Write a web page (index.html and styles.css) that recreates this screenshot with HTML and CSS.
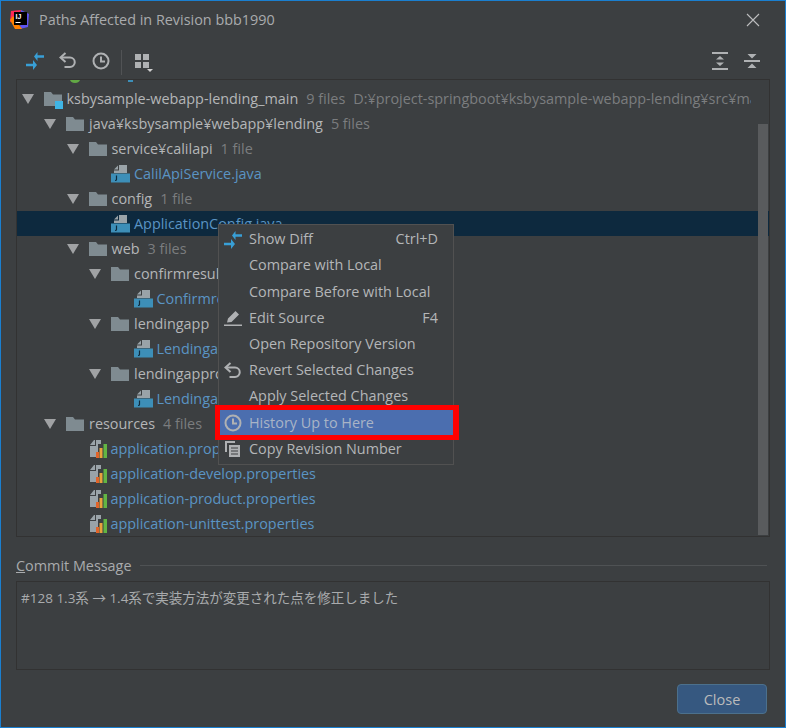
FILE: index.html
```html
<!DOCTYPE html>
<html lang="ja">
<head>
<meta charset="utf-8">
<title>Paths Affected in Revision bbb1990</title>
<link rel="stylesheet" href="styles.css">
</head>
<body>
<svg class="defs" width="0" height="0">
  <defs>
    <symbol id="i-arrow" viewBox="0 0 12 12"><path d="M0 1h12L6 11z" fill="#a0a2a4"/></symbol>
    <symbol id="i-folder" viewBox="0 0 18 16"><path d="M0 1h7l2 2.500h9V15H0z" fill="#7f8b91"/></symbol>
    <symbol id="i-java" viewBox="0 0 19 19">
      <path d="M3 9V6.500h5V1h8v8z" fill="#9aa3a8"/><path d="M3 5.500L7 1.500V5.500z" fill="#9aa3a8"/>
      <rect x="0" y="9.500" width="19" height="9" fill="#3d8fb8"/>
      <path d="M5.500 11.500v4q0 1-1.500 1" fill="none" stroke="#0f2a3c" stroke-width="1.200"/>
    </symbol>
    <symbol id="i-props" viewBox="0 0 18 19">
      <path d="M1 6l4-5h1v5zM7 1h5v4H9v8H7z" fill="#9aa3a8"/><path d="M1 7h6v11H1z" fill="#9aa3a8"/>
      <rect x="7" y="13" width="3" height="6" fill="#e0642a"/><rect x="10.500" y="9" width="3" height="10" fill="#e8a33d"/><rect x="14.500" y="5" width="3.500" height="14" fill="#62b543"/>
    </symbol>
    <symbol id="i-diff" viewBox="0 0 18 18">
      <path d="M8 4.500L11.500 0V3.300H18V5.700H11.500V9z" fill="#389fd6"/>
      <path d="M0 11.800H7V8l4 5-4 5V14.200H0z" fill="#389fd6"/>
    </symbol>
    <symbol id="i-revert" viewBox="0 0 18 18">
      <path d="M2.500 5.500h8.500a4.700 4.700 0 0 1 0 9.500H5.500" fill="none" stroke="#afb1b3" stroke-width="2"/><path d="M6.500 1L1.500 5.500l5 4.500" fill="none" stroke="#afb1b3" stroke-width="2"/>
    </symbol>
    <symbol id="i-history" viewBox="0 0 18 18">
      <circle cx="9" cy="9" r="7.500" fill="none" stroke="#afb1b3" stroke-width="2"/><path d="M9 4.500V9.500H13" fill="none" stroke="#afb1b3" stroke-width="2"/>
    </symbol>
  </defs>
</svg>
<div class="dialog">
  <header class="titlebar">
    <svg class="logo" width="20" height="20" viewBox="0 0 20 20">
      <path d="M1 1L11 0 8 10 0 12z" fill="#fe2857"/><path d="M11 0l8 4-1 13-8 2z" fill="#5f54f0"/><path d="M0 10l5 9h7L3 6z" fill="#ff8100"/>
      <rect x="4" y="2" width="13" height="13" fill="#000"/>
      <text x="5.500" y="9" class="logo-text">IJ</text><rect x="5.500" y="12" width="5" height="1" fill="#fff"/>
    </svg>
    <span class="title">Paths Affected in Revision bbb1990</span>
    <svg class="close-x" width="14" height="14" viewBox="0 0 14 14"><path d="M1 1l12 12M13 1L1 13" stroke="#bdbebf" stroke-width="1.100" fill="none"/></svg>
  </header>

  <div class="toolbar">
    <svg class="tool" width="18" height="18"><use href="#i-diff"/></svg>
    <svg class="tool" width="18" height="18"><use href="#i-revert"/></svg>
    <svg class="tool" width="18" height="18"><use href="#i-history"/></svg>
    <span class="tool-sep"></span>
    <svg class="tool tool-group" width="20" height="20" viewBox="0 0 20 20">
      <path d="M0 1h6v6H0zM8 1h6v6H8zM0 9h6v6H0zM8 9h6v6H8z" fill="#afb1b3"/><path d="M12 16h6l-3 3z" fill="#d0d0d0"/>
    </svg>
    <span class="tool-spacer"></span>
    <svg class="tool" width="16" height="18" viewBox="0 0 16 18">
      <path d="M0 0h16v2H0zM0 16h16v2H0z" fill="#afb1b3"/><path d="M8 4l4 3.500H4zM8 14l4-3.500H4z" fill="#afb1b3"/>
    </svg>
    <svg class="tool tool-last" width="16" height="16" viewBox="0 0 16 16">
      <path d="M0 7h16v2H0z" fill="#afb1b3"/><path d="M3.500 1h9L8 5.500zM3.500 15h9L8 10.500z" fill="#afb1b3"/>
    </svg>
  </div>

  <div class="tree">
    <div class="peek"><i class="peek-green"></i><i class="peek-blue"></i></div>

    <div class="row d0">
      <svg class="arrow"><use href="#i-arrow"/></svg>
      <span class="ic module"><svg width="18" height="16"><use href="#i-folder"/></svg><i class="badge"></i></span>
      <span class="name">ksbysample-webapp-lending_main</span><span class="meta">9 files</span><span class="meta path">D:¥project-springboot¥ksbysample-webapp-lending¥src¥main</span>
    </div>
    <div class="row d1">
      <svg class="arrow"><use href="#i-arrow"/></svg>
      <svg class="ic" width="18" height="16"><use href="#i-folder"/></svg>
      <span class="name">java¥ksbysample¥webapp¥lending</span><span class="meta">5 files</span>
    </div>
    <div class="row d2">
      <svg class="arrow"><use href="#i-arrow"/></svg>
      <svg class="ic" width="18" height="16"><use href="#i-folder"/></svg>
      <span class="name">service¥calilapi</span><span class="meta">1 file</span>
    </div>
    <div class="row d3 leaf">
      <span class="arrow"></span>
      <svg class="ic" width="19" height="19"><use href="#i-java"/></svg>
      <span class="name link">CalilApiService.java</span>
    </div>
    <div class="row d2">
      <svg class="arrow"><use href="#i-arrow"/></svg>
      <svg class="ic" width="18" height="16"><use href="#i-folder"/></svg>
      <span class="name">config</span><span class="meta">1 file</span>
    </div>
    <div class="row d3 leaf selected">
      <span class="arrow"></span>
      <svg class="ic" width="19" height="19"><use href="#i-java"/></svg>
      <span class="name link">ApplicationConfig.java</span>
    </div>
    <div class="row d2">
      <svg class="arrow"><use href="#i-arrow"/></svg>
      <svg class="ic" width="18" height="16"><use href="#i-folder"/></svg>
      <span class="name">web</span><span class="meta">3 files</span>
    </div>
    <div class="row d3">
      <svg class="arrow"><use href="#i-arrow"/></svg>
      <svg class="ic" width="18" height="16"><use href="#i-folder"/></svg>
      <span class="name">confirmresult</span><span class="meta">1 file</span>
    </div>
    <div class="row d4 leaf">
      <span class="arrow"></span>
      <svg class="ic" width="19" height="19"><use href="#i-java"/></svg>
      <span class="name link">ConfirmresultController.java</span>
    </div>
    <div class="row d3">
      <svg class="arrow"><use href="#i-arrow"/></svg>
      <svg class="ic" width="18" height="16"><use href="#i-folder"/></svg>
      <span class="name">lendingapp</span><span class="meta">1 file</span>
    </div>
    <div class="row d4 leaf">
      <span class="arrow"></span>
      <svg class="ic" width="19" height="19"><use href="#i-java"/></svg>
      <span class="name link">LendingappController.java</span>
    </div>
    <div class="row d3">
      <svg class="arrow"><use href="#i-arrow"/></svg>
      <svg class="ic" width="18" height="16"><use href="#i-folder"/></svg>
      <span class="name">lendingapproval</span><span class="meta">1 file</span>
    </div>
    <div class="row d4 leaf">
      <span class="arrow"></span>
      <svg class="ic" width="19" height="19"><use href="#i-java"/></svg>
      <span class="name link">LendingapprovalController.java</span>
    </div>
    <div class="row d1">
      <svg class="arrow"><use href="#i-arrow"/></svg>
      <svg class="ic" width="18" height="16"><use href="#i-folder"/></svg>
      <span class="name">resources</span><span class="meta">4 files</span>
    </div>
    <div class="row d2 leaf">
      <span class="arrow"></span>
      <svg class="ic" width="18" height="19"><use href="#i-props"/></svg>
      <span class="name link">application.properties</span>
    </div>
    <div class="row d2 leaf">
      <span class="arrow"></span>
      <svg class="ic" width="18" height="19"><use href="#i-props"/></svg>
      <span class="name link">application-develop.properties</span>
    </div>
    <div class="row d2 leaf">
      <span class="arrow"></span>
      <svg class="ic" width="18" height="19"><use href="#i-props"/></svg>
      <span class="name link">application-product.properties</span>
    </div>
    <div class="row d2 leaf">
      <span class="arrow"></span>
      <svg class="ic" width="18" height="19"><use href="#i-props"/></svg>
      <span class="name link">application-unittest.properties</span>
    </div>
    <div class="scrollbar"></div>
  </div>

  <div class="commit-head">
    <span class="commit-label"><u>C</u>ommit Message</span>
    <span class="commit-line"></span>
  </div>
  <div class="commit-box">#128 1.3系 → 1.4系で実装方法が変更された点を修正しました</div>

  <footer class="footer">
    <button class="close-btn" type="button">Close</button>
  </footer>

  <div class="menu">
    <div class="mi"><svg class="mi-ic" width="18" height="18"><use href="#i-diff"/></svg><span class="mt">Show Diff</span><span class="mt key">Ctrl+D</span></div>
    <div class="mi"><span class="mi-ic"></span><span class="mt">Compare with Local</span></div>
    <div class="mi"><span class="mi-ic"></span><span class="mt">Compare Before with Local</span></div>
    <div class="mi"><svg class="mi-ic" width="18" height="18" viewBox="0 0 18 18"><path d="M0 15.500h18V17H0zM3 13.500l1-4L11.500 2l3.500 3.500L7.500 13z" fill="#afb1b3"/></svg><span class="mt">Edit Source</span><span class="mt key">F4</span></div>
    <div class="mi"><span class="mi-ic"></span><span class="mt">Open Repository Version</span></div>
    <div class="mi"><svg class="mi-ic" width="18" height="18"><use href="#i-revert"/></svg><span class="mt">Revert Selected Changes</span></div>
    <div class="mi"><span class="mi-ic"></span><span class="mt">Apply Selected Changes</span></div>
    <div class="mi active"><svg class="mi-ic" width="18" height="18"><use href="#i-history"/></svg><span class="mt">History Up to Here</span></div>
    <div class="mi"><svg class="mi-ic" width="18" height="18" viewBox="0 0 18 18"><path d="M1 1h10v2H3v9H1z" fill="#afb1b3"/><path d="M5 5h11v12H5z" fill="#afb1b3"/><path d="M7 8h7M7 11h7M7 14h7" stroke="#3c3f41" stroke-width="1"/></svg><span class="mt">Copy Revision Number</span></div>
  </div>
  <div class="callout"></div>
</div>
</body>
</html>
```

FILE: styles.css
```css
* { box-sizing: border-box; }
html, body { margin: 0; padding: 0; height: 100%; overflow: hidden; background: #3c3f41; }
body { font-family: "Open Sans", "Noto Sans CJK JP", sans-serif; font-size: 14.4px; color: #bbbbbb; }
.defs { position: absolute; }

.dialog {
  position: relative;
  width: 786px; height: 728px;
  display: flex; flex-direction: column;
  background: #3c3f41;
  border: 1px solid #1a7fd0;
  padding: 0 15px;
}

.titlebar { height: 36px; display: flex; align-items: center; margin: 0 -6px; padding-top: 1px; }
.logo { flex: none; margin-right: 9px; }
.logo-text { font: bold 7px "Liberation Sans", sans-serif; fill: #fff; }
.title { font-size: 14.4px; color: #a9abad; white-space: nowrap; }
.close-x { margin-left: auto; margin-right: 16px; }

.toolbar { height: 42px; display: flex; align-items: center; padding: 6px 0 0 10px; }
.tool { flex: none; margin-right: 15px; }
.tool-sep { width: 1px; height: 25px; background: #515355; margin: 0 13px -2px -4px; }
.tool-group { margin: 4px 0 0 0; }
.tool-spacer { flex: 1; }
.tool-last { margin-right: 10px; margin-left: 1px; }

.tree {
  position: relative;
  height: 458px;
  border: 1px solid #323232;
  overflow: hidden;
}
.peek { height: 6px; position: relative; overflow: hidden; }
.peek-green { position: absolute; left: 53px; top: -4px; width: 10px; height: 7px; border-radius: 50%; background: #62a845; }
.peek-blue { position: absolute; left: 111px; top: -2px; width: 5px; height: 4px; background: #3d8fb8; }

.row { height: 25px; display: flex; align-items: center; white-space: nowrap; overflow: hidden; padding-right: 18px; }
.d0 { padding-left: 4.5px; }
.d1 { padding-left: 27px; }
.d2 { padding-left: 49.5px; }
.d3 { padding-left: 72px; }
.d4 { padding-left: 94.5px; }
.arrow { flex: none; width: 12px; height: 12px; margin-right: 10px; }
.ic { flex: none; margin-right: 5px; }
.leaf .ic { margin-right: 4px; }
.module { position: relative; width: 18px; height: 16px; display: block; }
.module svg { display: block; }
.badge { position: absolute; right: -1px; bottom: -2px; width: 8px; height: 8px; background: #3fb4e4; }
.name { color: #b4b6b8; margin-bottom: 1px; }
.link { color: #5a94c4; }
.meta { color: #7b7d7f; margin: 0 0 1px 8px; }
.path { overflow: hidden; flex: 1; min-width: 0; }
.selected { background: #0d293e; }
.scrollbar { position: absolute; right: 1px; top: 44px; bottom: 1px; width: 10px; background: #595b5d; }

.commit-head { display: flex; align-items: center; height: 30px; margin-top: 14px; }
.commit-label { color: #a9abad; white-space: nowrap; margin-bottom: 2px; }
.commit-line { flex: 1; height: 1px; background: #4f5254; margin: -1px 3px 0 8px; }

.commit-box {
  height: 89px;
  border: 1px solid #323232;
  padding: 6px 4px;
  color: #a9abad;
  font-size: 13.5px;
  line-height: 20px;
}

.footer { display: flex; justify-content: flex-end; padding: 14px 3px 0 0; }
.close-btn {
  width: 90px; height: 30px;
  background: #365880;
  border: 1px solid #4c708c;
  border-radius: 4px;
  color: #bbbbbb;
  font: inherit;
  font-size: 14.5px;
  padding: 0;
}

.menu {
  position: absolute;
  left: 217px; top: 223px;
  width: 236px;
  border: 1px solid #515151;
  background: #3c3f41;
  padding: 1.7px 0 1.3px;
}
.mi { height: 26.2px; display: flex; align-items: center; padding: 0 15px 0 5px; color: #b4b6b8; white-space: nowrap; }
.mi-ic { flex: none; width: 18px; height: 18px; margin-right: 7px; }
.mt { margin-bottom: 2px; }
.key { margin-left: auto; }
.active { background: #4b6eaf; color: #a9b4c6; }

.callout {
  position: absolute;
  left: 214px; top: 404px;
  width: 244px; height: 35px;
  border: solid #ff0000;
  border-width: 5px 6px 5px 5px;
}
```
